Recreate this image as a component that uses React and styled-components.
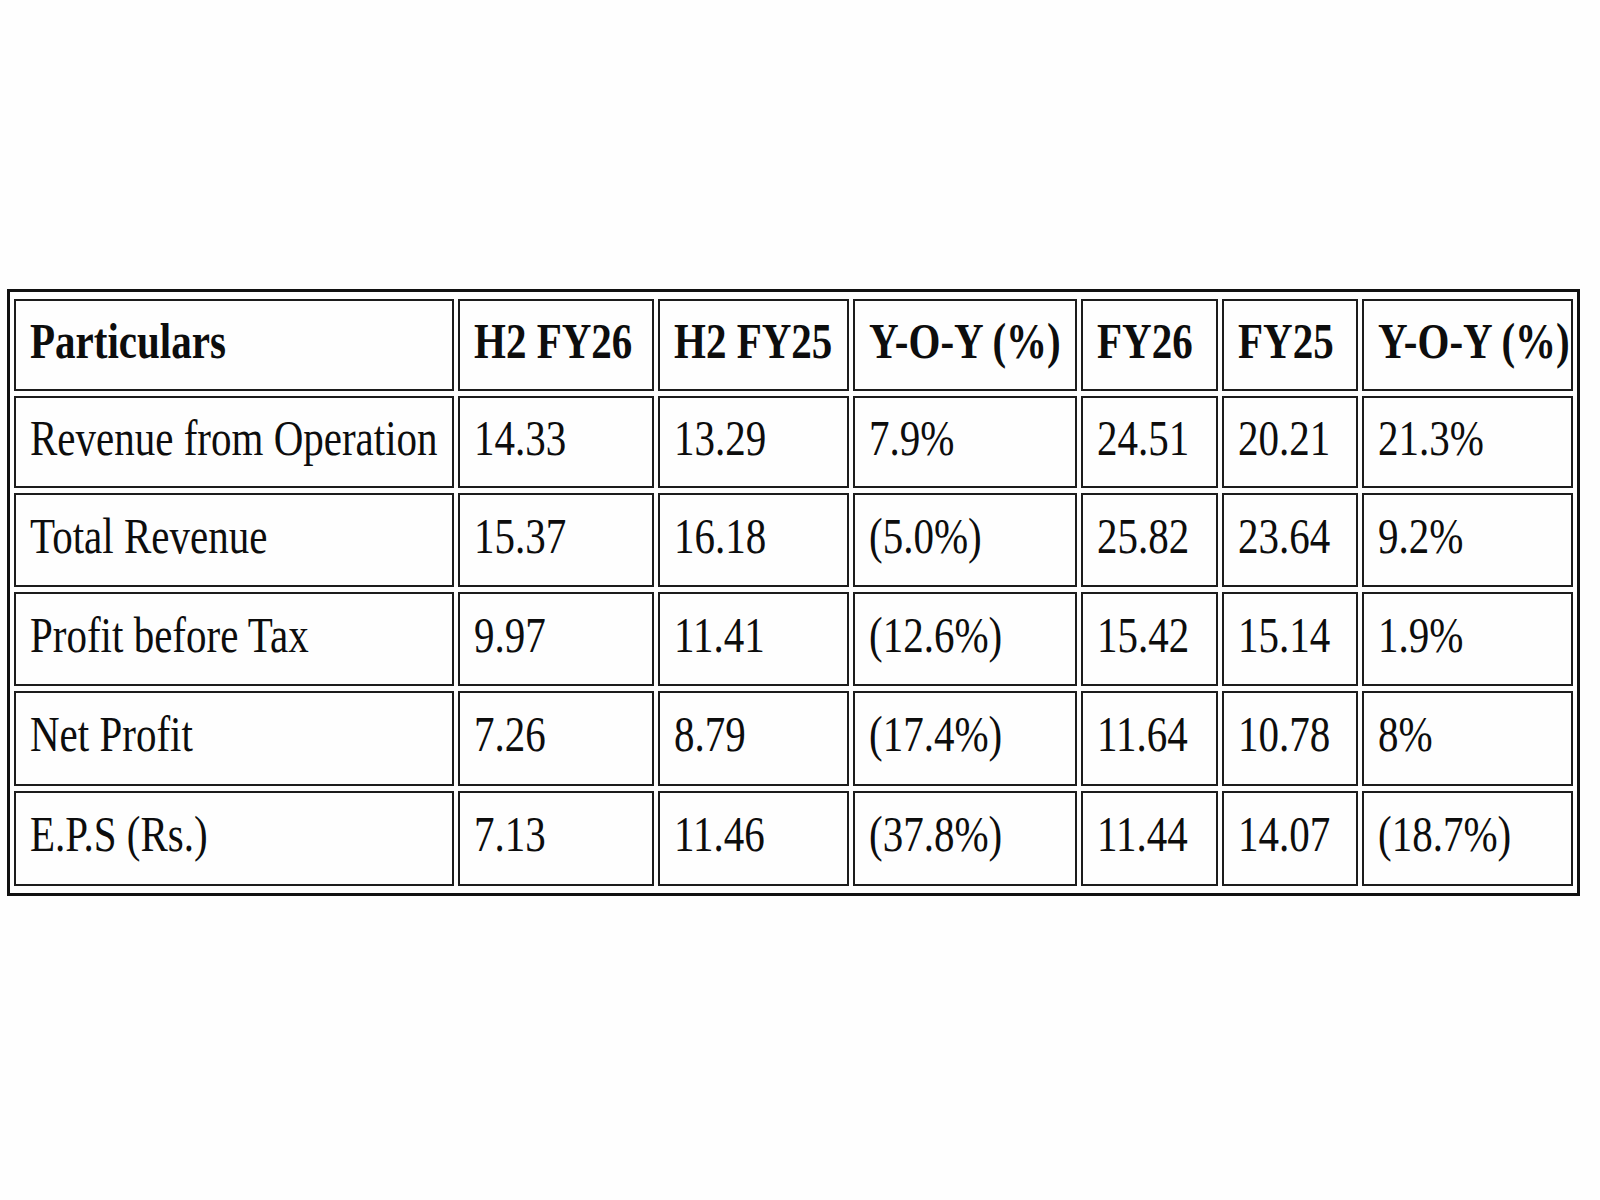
import React from "react";
import styled, { createGlobalStyle } from "styled-components";

const Global = createGlobalStyle`
  html, body { margin: 0; padding: 0; background: #ffffff; }
  body { font-family: "Liberation Serif", "Times New Roman", serif; color: #111; }
`;

const Page = styled.div`
  width: 1600px;
  min-height: 1200px;
  box-sizing: border-box;
  padding: 289px 0 0 7px;
  background: #fefefe;
`;

const Table = styled.table`
  width: 1573px;
  table-layout: fixed;
  border-collapse: separate;
  border-spacing: 4px 5px;
  padding: 2px 0;
  border: 3px solid #111;
`;

const Col = styled.col`
  width: ${(p) => p.$w}px;
`;

const Row = styled.tr`
  height: ${(p) => p.$h}px;
`;

const Cell = styled.td`
  box-sizing: border-box;
  border: 2px solid #1c1c1c;
  padding: 0 6px 8px 14px;
  vertical-align: middle;
  white-space: nowrap;
  overflow: visible;
  font-size: 41px;
  line-height: 41px;
  font-weight: ${(p) => (p.$head ? 700 : 400)};
  color: #0d0d0d;
`;

const Text = styled.span`
  display: inline-block;
  transform: scaleY(1.22);
  transform-origin: center center;
`;

const widths = [440, 196, 191, 224, 137, 136, 211];
const heights = [92, 94, 94, 95, 95];

const header = ["Particulars", "H2 FY26", "H2 FY25", "Y-O-Y (%)", "FY26", "FY25", "Y-O-Y (%)"];

const rows = [
  ["Revenue from Operation", "14.33", "13.29", "7.9%", "24.51", "20.21", "21.3%"],
  ["Total Revenue", "15.37", "16.18", "(5.0%)", "25.82", "23.64", "9.2%"],
  ["Profit before Tax", "9.97", "11.41", "(12.6%)", "15.42", "15.14", "1.9%"],
  ["Net Profit", "7.26", "8.79", "(17.4%)", "11.64", "10.78", "8%"],
  ["E.P.S (Rs.)", "7.13", "11.46", "(37.8%)", "11.44", "14.07", "(18.7%)"],
];

export default function App() {
  return (
    <Page>
      <Global />
      <Table>
        <colgroup>
          {widths.map((w, i) => (
            <Col key={i} $w={w} />
          ))}
        </colgroup>
        <tbody>
          <Row $h={92}>
            {header.map((h, i) => (
              <Cell key={i} $head>
                <Text>{h}</Text>
              </Cell>
            ))}
          </Row>
          {rows.map((r, ri) => (
            <Row key={ri} $h={heights[ri]}>
              {r.map((c, ci) => (
                <Cell key={ci}>
                  <Text>{c}</Text>
                </Cell>
              ))}
            </Row>
          ))}
        </tbody>
      </Table>
    </Page>
  );
}
